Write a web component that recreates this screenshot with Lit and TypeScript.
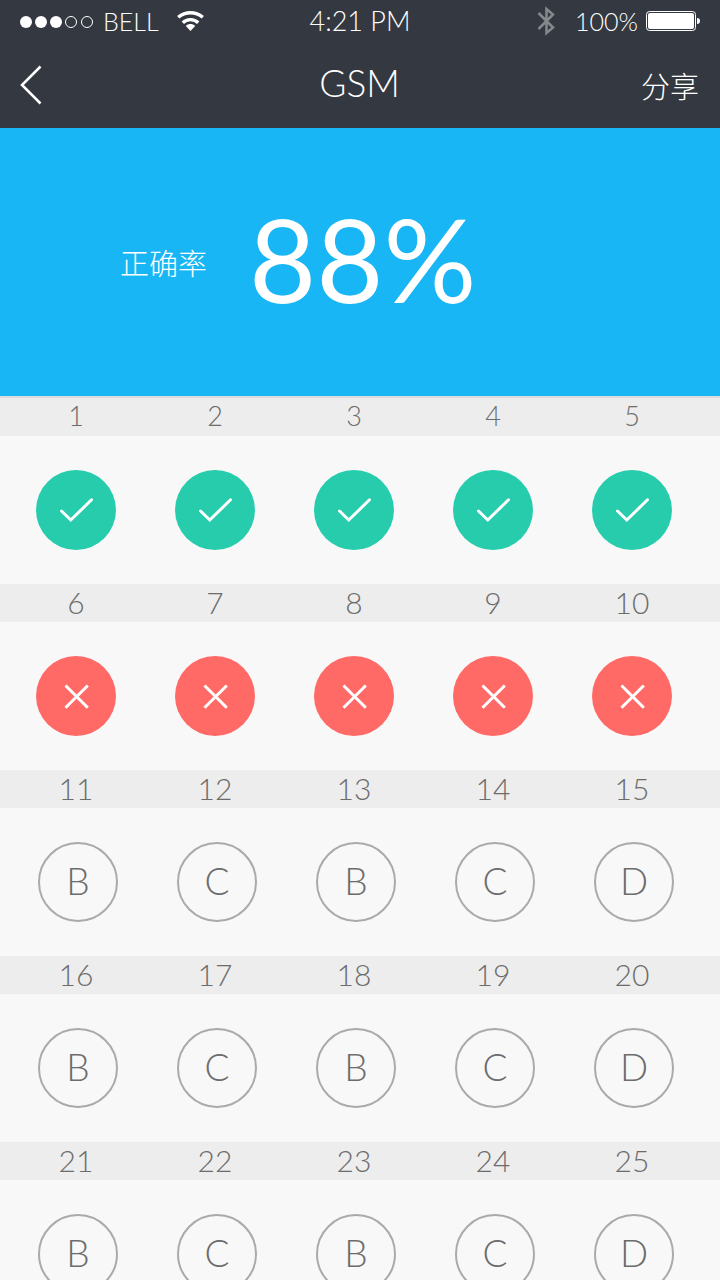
import { LitElement, html, css, svg } from "lit";
import { customElement, property } from "lit/decorators.js";

type Answer = "right" | "wrong" | "B" | "C" | "D";

interface Group {
  start: number;
  answers: Answer[];
}

const choices: Answer[] = ["B", "C", "B", "C", "D"];

const groups: Group[] = [
  { start: 1, answers: Array(5).fill("right") },
  { start: 6, answers: Array(5).fill("wrong") },
  { start: 11, answers: choices },
  { start: 16, answers: choices },
  { start: 21, answers: choices },
];

@customElement("status-bar")
class StatusBar extends LitElement {
  static styles = css`
    :host {
      display: grid;
      grid-template-columns: 1fr auto 1fr;
      align-items: center;
      height: 42px;
      padding: 0 20px;
      font-size: 27px;
      line-height: 40px;
    }
    .side {
      display: flex;
      align-items: center;
      font-size: 25px;
    }
    .carrier {
      margin: 0 18px 0 9px;
    }
    .end {
      justify-content: flex-end;
    }
    .level {
      margin: 0 8px 0 20px;
    }
    svg {
      display: block;
      flex: none;
    }
  `;

  render() {
    return html`
      <div class="side">
        <svg width="74" height="14" viewBox="0 0 74 14" aria-hidden="true">
          ${[6, 21, 36].map((x) => svg`<circle cx=${x} cy="8" r="6" fill="#fff" />`)}
          ${[51, 67].map((x) => svg`<circle cx=${x} cy="8" r="5.5" fill="none" stroke="#fff" />`)}
        </svg>
        <span class="carrier">BELL</span>
        <svg width="27" height="20" viewBox="0 0 27 20" aria-hidden="true">
          <g fill="none" stroke="#fff" stroke-width="3.4">
            <path d="M1.200 6.300C8.500 .2 18.500 .2 25.800 6.300" />
            <path d="M5.800 11.700C10 7.600 17 7.600 21.200 11.700" />
          </g>
          <path d="M8.800 15C11.500 12.400 15.500 12.400 18.200 15L13.500 20Z" fill="#fff" />
        </svg>
      </div>
      <span>4:21 PM</span>
      <div class="side end">
        <svg width="18" height="30" viewBox="0 0 18 30" aria-hidden="true">
          <path d="M1.500 7L16 21.500L9.500 27V3L16 8.500L1.500 23" fill="none" stroke="#85888c" stroke-width="2.500" />
        </svg>
        <span class="level">100%</span>
        <svg width="54" height="20" viewBox="0 0 54 20" aria-hidden="true">
          <rect x=".5" y=".5" width="49" height="19" rx="3" fill="none" stroke="#fff" />
          <rect x="2" y="2" width="46" height="16" rx="2" fill="#fff" />
          <path d="M51 7Q54 7 54 10T51 13Z" fill="#fff" />
        </svg>
      </div>
    `;
  }
}

@customElement("answer-group")
class AnswerGroup extends LitElement {
  @property({ attribute: false }) group!: Group;

  static styles = css`
    :host {
      display: block;
      --digits: 30px;
    }
    :host([lead]) {
      --digits: 27px;
      border-top: 2px solid #dcdcdc;
    }
    .row {
      display: flex;
      justify-content: space-between;
      padding: 0 48px 0 36px;
    }
    .numbers {
      padding-bottom: 2px;
      background: #ededed;
      color: #6c6c6c;
      font-size: var(--digits);
      line-height: 36px;
    }
    .numbers label {
      width: 80px;
      text-align: center;
    }
    .marks {
      padding-top: 34px;
      padding-bottom: 34px;
    }
    .open {
      padding-left: 38px;
      padding-right: 46px;
    }
    button {
      display: grid;
      place-items: center;
      box-sizing: border-box;
      width: 80px;
      height: 80px;
      padding: 0;
      border: 0;
      border-radius: 50%;
      background: none;
      color: #6c6c6c;
      font: inherit;
      font-size: 37px;
      line-height: 40px;
    }
    .right {
      background: #26ccac;
    }
    .wrong {
      background: #ff6966;
    }
    .choice {
      padding-bottom: 2px;
      border: 2px solid #aaa;
    }
    path {
      fill: none;
      stroke: #fff;
      stroke-width: 3;
    }
  `;

  private mark(answer: Answer) {
    if (answer === "right") {
      return html`<svg width="80" height="80" viewBox="0 0 80 80" aria-label="正确">
        <path d="M25.500 41L34.800 50L55.500 29.800" stroke-linecap="round" />
      </svg>`;
    }
    if (answer === "wrong") {
      return html`<svg width="80" height="80" viewBox="0 0 80 80" aria-label="错误">
        <path d="M29.500 29.500L51.800 51.800M51.800 29.500L29.500 51.800" />
      </svg>`;
    }
    return answer;
  }

  render() {
    const { start, answers } = this.group;
    const open = answers[0] !== "right" && answers[0] !== "wrong";
    return html`
      <div class="row numbers">
        ${answers.map((_, i) => html`<label for="q${start + i}">${start + i}</label>`)}
      </div>
      <div class="row marks ${open ? "open" : ""}">
        ${answers.map(
          (a, i) => html`<button id="q${start + i}" class=${open ? "choice" : a}>${this.mark(a)}</button>`
        )}
      </div>
    `;
  }
}

@customElement("app-root")
class AppRoot extends LitElement {
  static styles = css`
    :host {
      display: flex;
      flex-direction: column;
      height: 100vh;
      overflow: hidden;
      background: #f8f8f8;
      font-family: Lato, "Noto Sans CJK SC", sans-serif;
      font-weight: 300;
    }
    header {
      background: #343840;
      color: #fff;
    }
    nav {
      display: grid;
      grid-template-columns: 1fr auto 1fr;
      align-items: center;
      height: 86px;
      padding: 0 21px 0 20px;
    }
    h1 {
      margin: 0;
      padding-bottom: 4px;
      font-size: 37px;
      font-weight: 300;
      line-height: 44px;
    }
    nav button {
      padding: 0;
      border: 0;
      background: none;
      color: inherit;
      font: inherit;
      font-size: 29px;
      line-height: 40px;
    }
    .back {
      justify-self: start;
    }
    .share {
      justify-self: end;
      padding-top: 4px;
    }
    nav svg {
      display: block;
    }
    .score {
      display: flex;
      flex: none;
      align-items: center;
      gap: 42px;
      box-sizing: border-box;
      height: 268px;
      padding-left: 120px;
      background: #18b6f5;
      color: #fff;
    }
    .score-label {
      padding-top: 4px;
      font-size: 29px;
      line-height: 40px;
    }
    .score-value {
      padding-bottom: 6px;
      font-size: 116px;
      font-weight: 400;
      line-height: 140px;
    }
    main {
      flex: 1;
      min-height: 0;
      overflow-y: auto;
      scrollbar-width: none;
    }
  `;

  render() {
    return html`
      <header>
        <status-bar></status-bar>
        <nav>
          <button class="back" aria-label="返回">
            <svg width="22" height="40" viewBox="0 0 22 40">
              <path d="M20.500 1.500L2 20L20.500 38.500" fill="none" stroke="#fff" stroke-width="2.500" />
            </svg>
          </button>
          <h1>GSM</h1>
          <button class="share">分享</button>
        </nav>
      </header>
      <section class="score">
        <span class="score-label">正确率</span>
        <span class="score-value">88%</span>
      </section>
      <main>
        ${groups.map((g, i) => html`<answer-group .group=${g} ?lead=${i === 0}></answer-group>`)}
      </main>
    `;
  }
}
